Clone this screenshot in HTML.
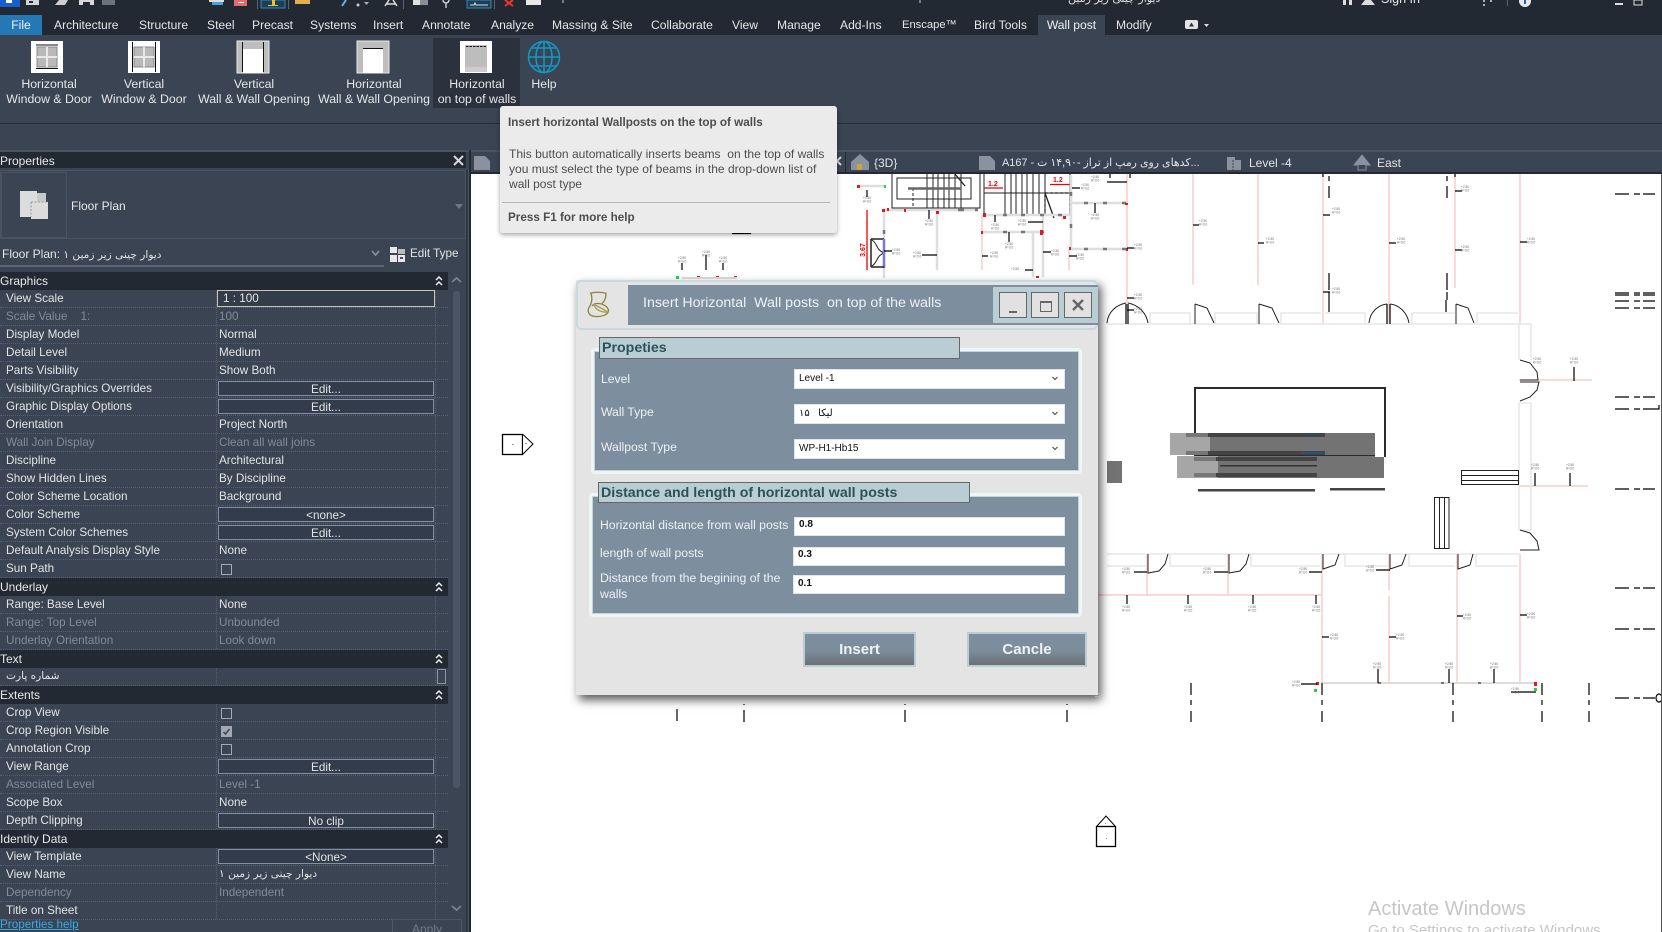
<!DOCTYPE html>
<html lang="en"><head><meta charset="utf-8"><title>Revit</title>
<style>
*{box-sizing:border-box}
html,body{margin:0;padding:0;width:1662px;height:932px;overflow:hidden;background:#fff;font-family:"Liberation Sans","DejaVu Sans",sans-serif}
.a{position:absolute;white-space:nowrap}
#top{left:0;top:0;width:1662px;height:35px;background:#222933}
.tab{top:15px;height:20px;line-height:21px;font-size:12.1px;color:#e6e6e6}
#rib{left:0;top:35px;width:1662px;height:115px;background:#3b4453}
.lbl{font-size:12.3px;color:#e6e6e6;text-align:center;line-height:15px;transform:translateX(-50%)}
#tip{left:500px;top:106px;width:337px;height:127px;background:#ebebeb;border-radius:3px;box-shadow:0 2px 5px rgba(0,0,0,.35);z-index:5;color:#4d4d4d;font-size:12px}
#props{left:0;top:150px;width:471px;height:782px;background:#3b4453;overflow:hidden}
.r{position:absolute;left:0;width:448px;height:18px;color:#e4e4e4;font-size:11.7px;line-height:15px;border-bottom:1px dotted #566072}
.r i{position:absolute;top:0;bottom:0;left:216px;width:1px;border-left:1px dotted #566072}
.r u{position:absolute;top:0;bottom:0;left:435px;width:1px;border-left:1px dotted #566072}
.r b{font-weight:normal;position:absolute;left:6px;top:1px}
.r em{font-style:normal;position:absolute;left:219px;top:1px}
.r.d{color:#828b99}
.r .btn{position:absolute;left:218px;top:1px;width:216px;height:15px;border:1px solid #8390a4;background:#333c4a;text-align:center;line-height:15px;color:#e4e4e4}
.r .cb{position:absolute;left:221px;top:4px;width:11px;height:11px;border:1px solid #a2a9b4}
.h{position:absolute;left:0;width:448px;height:18px;background:#222933;color:#e8e8e8;font-size:12px;line-height:17px}
.h span{position:absolute;left:0;top:1px}
.h svg{position:absolute;left:435px;top:3px}
#dlg{left:576px;top:280px;width:522px;height:415px;background:#e4e4e4;box-shadow:3px 5px 9px rgba(0,0,0,.65);z-index:4;color:#eef1f3}
.grp{position:absolute;background:#7d8f9f;border:3px solid #eff4f5;border-radius:4px;box-shadow:inset 0 0 0 1px #c2d5da}
.gh{position:absolute;background:#b8ced4;border:1px solid #666;color:#2f5058;font-size:14.2px;font-weight:bold;line-height:21px;padding-left:2px}
.f{position:absolute;background:#fff;border:1px solid #dfe6ea;color:#111;font-size:10px;font-weight:bold;line-height:13px;padding-left:4px}
.dl{position:absolute;font-size:12.2px;color:#eef1f3;line-height:16px}
.wb{position:absolute;top:12px;width:28px;height:26px;background:#e1e1e1;border:1px solid #666}
.bt{position:absolute;top:352px;height:35px;border:2px solid #b8ced4;background:linear-gradient(#7d8f9f 0,#7b8c9b 55%,#6c7074 100%);color:#eef2f4;font-weight:bold;font-size:15px;text-align:center;line-height:31px}
svg text{font-family:"Liberation Sans",sans-serif}
.t{font-size:3.2px;fill:#666;text-anchor:middle}
.fa{font-family:"DejaVu Sans",sans-serif;font-size:10.6px}
</style></head><body>

<div class="a" id="top"></div>
<svg class="a" style="left:0;top:0" width="1662" height="15" viewBox="0 0 1662 15">
<rect x="0" y="0" width="20" height="7" fill="#1560cc"/><rect x="6" y="0" width="6" height="3" fill="#fff"/>
<rect x="26" y="0" width="13" height="5" fill="#d5d5d5"/><rect x="29" y="1" width="4" height="2" fill="#222933"/>
<path d="M55 5L59 0H68L65 5Z" fill="#cfcfcf"/><rect x="79" y="0" width="15" height="5" fill="#d8d8d8"/><rect x="83" y="2" width="7" height="3" fill="#222933"/>
<rect x="102" y="0" width="13" height="5" fill="#6d737c"/>
<rect x="212" y="0" width="11" height="5" fill="#4aa0e0"/><rect x="209" y="0" width="15" height="2" fill="#ddd"/>
<rect x="234" y="0" width="13" height="6" fill="#e9686c"/><rect x="238" y="2" width="6" height="1" fill="#fff"/>
<rect x="257" y="0" width="1" height="9" fill="#5a6370"/>
<rect x="261" y="0" width="24" height="8" fill="#1d3f55" stroke="#3c87ad"/><rect x="272" y="0" width="3" height="5" fill="#f0c040"/><rect x="268" y="5" width="10" height="1" fill="#f0c040"/>
<rect x="288" y="0" width="1" height="9" fill="#5a6370"/>
<rect x="295" y="0" width="15" height="4" fill="#e0b050"/>
<path d="M346 0L342 6" stroke="#6ab0e0" stroke-width="2"/><circle cx="358" cy="5" r="1.5" fill="#ccc"/><path d="M364 2h5l-2.500 3z" fill="#aaa"/>
<path d="M385 6L389 0M393 0L397 6M387 4H395" stroke="#ddd" stroke-width="1.500"/>
<rect x="403" y="0" width="1" height="9" fill="#5a6370"/>
<rect x="413" y="0" width="7" height="5" fill="#e0e0e0"/><rect x="420" y="0" width="8" height="5" fill="#8a8f96"/>
<path d="M443 0a3 3 0 0 0 6 0M446 3v5" stroke="#ddd" fill="none" stroke-width="1.300"/>
<rect x="467" y="0" width="24" height="8" fill="#1d3f55" stroke="#3c87ad"/><path d="M470 5h4l1-2 1 2h12" stroke="#ddd" fill="none"/>
<rect x="494" y="0" width="1" height="9" fill="#5a6370"/>
<path d="M505 0l8 6M513 0l-8 6" stroke="#e33" stroke-width="2"/><rect x="526" y="0" width="15" height="5" fill="#e8e8e8"/>
<path d="M563 0v3" stroke="#ccc"/><path d="M920 0v3" stroke="#ccc"/>
<rect x="1343" y="0" width="3" height="5" fill="#ddd"/><rect x="1349" y="0" width="3" height="5" fill="#ddd"/>
<path d="M1361 5h14l-4-5h-6z" fill="#ddd"/>
<rect x="1483" y="0" width="2" height="2" fill="#aac"/><rect x="1490" y="0" width="2" height="2" fill="#aac"/><rect x="1483" y="4" width="2" height="2" fill="#aac"/>
<rect x="1507" y="0" width="1" height="6" fill="#5a6370"/><circle cx="1525" cy="1" r="6" fill="#e8e8e8"/><rect x="1524" y="0" width="2" height="4" fill="#2b5fa8"/>
<rect x="1615" y="3" width="8" height="2" fill="#ddd"/><rect x="1634" y="0" width="8" height="5" fill="none" stroke="#ddd"/>
<text x="1381" y="3" font-size="12.500" fill="#e6e6e6">Sign In</text>
<text x="1068" y="2" font-size="11" fill="#ddd" style="font-family:'DejaVu Sans',sans-serif">دیوار چینی زیر زمین</text>
</svg>
<div class="a tab" style="left:0;width:42px;background:#2478b5;color:#f2f2f2;text-align:center">File</div>
<div class="a tab" style="left:54px">Architecture</div>
<div class="a tab" style="left:139px">Structure</div>
<div class="a tab" style="left:207px">Steel</div>
<div class="a tab" style="left:252px">Precast</div>
<div class="a tab" style="left:310px">Systems</div>
<div class="a tab" style="left:373px">Insert</div>
<div class="a tab" style="left:422px">Annotate</div>
<div class="a tab" style="left:491px">Analyze</div>
<div class="a tab" style="left:552px">Massing &amp; Site</div>
<div class="a tab" style="left:651px">Collaborate</div>
<div class="a tab" style="left:732px">View</div>
<div class="a tab" style="left:777px">Manage</div>
<div class="a tab" style="left:840px">Add-Ins</div>
<div class="a tab" style="left:902px;font-size:11.2px">Enscape™</div>
<div class="a tab" style="left:974px">Bird Tools</div>
<div class="a tab" style="left:1038px;width:67px;background:#3b4453;text-align:center;color:#f0f0f0">Wall post</div>
<div class="a tab" style="left:1116px">Modify</div>
<svg class="a" style="left:1185px;top:31px;margin-top:-13px" width="26" height="12" viewBox="0 0 26 12"><rect x="0" y="2" width="13" height="9" rx="2" fill="#e4e4e4"/><path d="M4 8.500l2.500-4 2.500 4z" fill="#333"/><path d="M19 6h5l-2.500 3z" fill="#ddd"/></svg>

<div class="a" id="rib"></div>
<div class="a" style="left:0;top:123px;width:1662px;height:1px;background:#262c37"></div>
<div class="a" style="left:433px;top:38px;width:87px;height:70px;background:#2b313d"></div>

<svg class="a" style="left:0;top:35px" width="600" height="45" viewBox="0 35 600 45">
<g>
<rect x="31" y="41" width="32" height="32" fill="#fff"/><rect x="37" y="47" width="20" height="20" fill="#b9b9b9" stroke="#888"/><path d="M37 57H57M47 47V67" stroke="#e8e8e8" stroke-width="2"/><path d="M36 45H58M36 68.500H58" stroke="#111"/>
<rect x="128" y="41" width="32" height="32" fill="#fff"/><rect x="134" y="47" width="20" height="20" fill="#b9b9b9" stroke="#888"/><path d="M134 57H154M144 47V67" stroke="#e8e8e8" stroke-width="2"/><path d="M132.500 42V72M155.500 42V72" stroke="#111"/>
<rect x="237" y="41" width="32" height="32" fill="#bdbdbd" stroke="#e8e8e8"/><rect x="243" y="49" width="20" height="24" fill="#fff"/><path d="M242.500 42V72M263.500 42V72" stroke="#111"/>
<rect x="357" y="41" width="32" height="32" fill="#bdbdbd" stroke="#e8e8e8"/><rect x="363" y="49" width="20" height="24" fill="#fff"/><path d="M363 48.500H383" stroke="#111"/>
<rect x="460" y="41" width="32" height="32" fill="#fff"/><rect x="465" y="45" width="22" height="27" fill="#bdbdbd"/><rect x="465" y="67" width="22" height="5" fill="#cdcdcd"/><path d="M466 46.500H486" stroke="#111" stroke-dasharray="2.500 1"/>
<g fill="none" stroke="#0f9ac6" stroke-width="1.500"><circle cx="544" cy="57" r="15.500"/><ellipse cx="544" cy="57" rx="8" ry="15.500"/><path d="M544 41.500V72.500M528.500 57H559.500M531 48H557M531 66H557"/></g>
</g></svg>
<div class="a lbl" style="left:49px;top:77px">Horizontal<br>Window &amp; Door</div>
<div class="a lbl" style="left:144px;top:77px">Vertical<br>Window &amp; Door</div>
<div class="a lbl" style="left:254px;top:77px">Vertical<br>Wall &amp; Wall Opening</div>
<div class="a lbl" style="left:374px;top:77px">Horizontal<br>Wall &amp; Wall Opening</div>
<div class="a lbl" style="left:477px;top:77px">Horizontal<br>on top of walls</div>
<div class="a lbl" style="left:544px;top:77px">Help</div>

<div class="a" id="tip">
<div class="a" style="left:8px;top:10px;font-weight:bold;font-size:11.7px">Insert horizontal Wallposts on the top of walls</div>
<div class="a" style="left:9px;top:41px;line-height:15px;font-size:12.05px">This button automatically inserts beams&nbsp; on the top of walls<br>you must select the type of beams in the drop-down list of<br>wall post type</div>
<div class="a" style="left:2px;top:96px;width:328px;height:1px;background:#b5b5b5"></div>
<div class="a" style="left:8px;top:105px;font-weight:bold;font-size:11.7px">Press F1 for more help</div>
</div>

<!-- tab strip -->
<div class="a" style="left:471px;top:150px;width:1191px;height:2px;background:#4a5362"></div>
<div class="a" style="left:471px;top:152px;width:1191px;height:20px;background:#3b4453"></div>
<div class="a" style="left:471px;top:172px;width:1191px;height:2px;background:#222933"></div>
<svg class="a" style="left:471px;top:152px" width="1191" height="20" viewBox="471 152 1191 20">
<path d="M474 156H485L490 161V170H474Z" fill="#8b929d"/>
<path d="M833 157l8 8M841 157l-8 8" stroke="#d8d8d8" stroke-width="2"/>
<rect x="845" y="152" width="1" height="20" fill="#222933"/>
<path d="M851 162L860 154L869 162V170H851Z" fill="#8b929d"/><rect x="857" y="164" width="5" height="6" fill="#caa43c"/>
<path d="M979 156H990L995 161V170H979Z" fill="#8b929d"/>
<path d="M1227 157H1235V160H1241V170H1227Z" fill="#8b929d"/><path d="M1233 160V170" stroke="#3b4453" stroke-dasharray="2 1"/>
<path d="M1354 165L1362 155L1370 165H1366V170H1358V165Z" fill="none" stroke="#8b929d"/><path d="M1354 165L1362 155L1370 165Z" fill="#8b929d"/>
</svg>
<div class="a" style="left:874px;top:156px;font-size:12px;color:#e4e4e4">{3D}</div>
<div class="a" dir="rtl" style="left:1002px;top:156px;width:198px;text-align:left;font-size:10.9px;line-height:14px;color:#e4e4e4;font-family:'Liberation Sans','DejaVu Sans',sans-serif">...کدهای روی رمپ از تراز -۱۴,۹۰ ت - A167</div>
<div class="a" style="left:1249px;top:156px;font-size:12px;color:#e4e4e4">Level -4</div>
<div class="a" style="left:1377px;top:156px;font-size:12px;color:#e4e4e4">East</div>

<!-- Floor plan -->
<svg class="a" style="left:0;top:0" width="1662" height="932" viewBox="0 0 1662 932">
<g fill="none">
<!-- pink verticals -->
<g stroke="#fbcccc" stroke-width="1.500">
<path d="M1127 174V310M1193 174V285M1258 174V285M1323 174V324M1389 174V324M1455 174V288M1520 174V324"/>
<path d="M1519 380H1592M1519 486H1588M1098 595H1322M1147 554V595M1228 554V595M1322 554V683M1389 554V590M1389 596V683M1457 554V683M1520 554V683"/>
<path d="M982 215V270M1069 250V270"/>
</g>
<!-- room walls light -->
<g stroke="#e5e7e8" stroke-width="1.500">
<path d="M1107 324H1519M1107 554H1519"/>
<path d="M1150 324V313H1190V324M1215 324V313H1257V324M1281 324V313H1321M1325 313H1365V324M1412 324V313H1455M1477 324V313H1518"/>
<path d="M1519 324V360M1531 360V324M1519 324H1531M1519 403V530M1531 403V530M1519 403H1531M1519 530H1531"/>
<path d="M1107 566H1146M1170 554V566H1226M1251 554V566H1320M1345 554V566H1388M1409 554V566H1455M1476 554V566H1518"/>
</g>
<path d="M1322 683H1537" stroke="#dcdcdc" stroke-width="2"/>
<path d="M1478 683h3M1378 683h3M1441 683h3" stroke="#777" stroke-width="2"/>
<!-- doors -->
<g stroke="#222" stroke-width="1">
<path d="M1126 304V324M1128 304V324" stroke-width="1.400"/>
<path d="M1107 323C1108 312 1116 305 1126 303M1128 303C1138 305 1146 312 1148 323"/>
<path d="M1195 304V324M1195 304L1207 308L1214 323"/>
<path d="M1259 304V324M1259 304L1272 308L1279 323"/>
<path d="M1387 304V324M1390 304V324" stroke-width="1.400"/>
<path d="M1369 323C1370 312 1378 305 1387 304M1390 304C1399 305 1407 312 1409 323"/>
<path d="M1456 304V324M1456 304L1468 308L1474 323"/>
<path d="M1520 360L1530 363L1537 372L1538 380H1520"/>
<path d="M1520 382H1539L1537 390L1530 397L1520 401"/>
<path d="M1520 530L1530 533L1537 541L1539 550H1520"/>
<path d="M1148 554V573L1159 571L1165 564L1168 554"/>
<path d="M1229 554V573L1240 571L1246 564L1249 554"/>
<path d="M1323 554V569L1335 565L1339 554"/>
<path d="M1390 554V569L1402 565L1406 554"/>
<path d="M1458 554V569L1470 565L1473 554"/>
</g>
<!-- central rect -->
<rect x="1195" y="388" width="190" height="68" stroke="#2b2b2b" stroke-width="2"/>
</g>
<rect x="1170" y="433" width="205" height="22" fill="#737373"/><rect x="1170" y="433" width="40" height="22" fill="#a6a6a6"/>
<rect x="1186" y="433" width="22" height="4" fill="#777"/><rect x="1208" y="433" width="117" height="4" fill="#444"/><rect x="1302" y="434" width="23" height="2" fill="#2d4c63"/>
<rect x="1186" y="451" width="22" height="4" fill="#777"/><rect x="1208" y="451" width="117" height="4" fill="#444"/><rect x="1302" y="452" width="23" height="1.500" fill="#1e5a80"/>
<rect x="1177" y="456" width="207" height="22" fill="#737373"/><rect x="1177" y="456" width="41" height="22" fill="#a6a6a6"/><rect x="1375" y="455" width="9" height="2" fill="#fff"/>
<rect x="1194" y="457" width="22" height="4" fill="#777"/><rect x="1216" y="457" width="101" height="4" fill="#444"/>
<rect x="1194" y="473" width="22" height="4" fill="#777"/><rect x="1216" y="473" width="101" height="4" fill="#444"/>
<rect x="1220" y="465" width="97" height="1.500" fill="#333"/>
<rect x="1198" y="489" width="117" height="2.500" fill="#444"/><rect x="1330" y="488" width="55" height="2.500" fill="#444"/>
<rect x="1107" y="461" width="15" height="22" fill="#737373"/>
<g fill="none" stroke="#222">
<rect x="1461.500" y="470.500" width="57" height="14"/><path d="M1462 475.500H1518M1462 480.500H1518"/>
<rect x="1434.500" y="497.500" width="14.500" height="51"/><path d="M1439.500 498V548M1444.500 498V548"/>
</g>
<!-- stairs -->
<g fill="none" stroke="#222">
<path d="M892 174V208H980V174"/><rect x="897" y="178" width="74" height="21"/>
<path d="M927 174V208M933 174V208M938 174V208M944 174V208M949 174V208M955 174V208M961 174V208"/>
<path d="M913 188V206" stroke-dasharray="3 2"/>
<path d="M984 174V215H1070V174M984 193H1070M984 188V215"/>
<path d="M1005 174V215M1011 174V215M1016 174V215M1022 174V215M1027 174V215M1033 174V215M1039 174V215M1045 174V215"/>
<path d="M1045 193L1054 218M955 174L965 186" stroke-width="1.300"/>
<path d="M1045 193H1070V215H1045Z" stroke-dasharray="3 2" stroke-width="1.200"/>
</g>
<path d="M908 188.500H961" stroke="#666" stroke-width="2.500"/>
<path d="M984 188H1003M1050 184.500H1070" stroke="#e00" stroke-width="1.300"/>
<text x="988" y="186" font-size="7" fill="#e00" font-weight="bold">1.2</text><text x="1053" y="182" font-size="7" fill="#e00" font-weight="bold">1.2</text>
<!-- plan walls -->
<g fill="none" stroke="#dedede" stroke-width="2.500">
<path d="M884 210H978M884 210V278M937 210V270M984 215H1070M982 232H1042M1033 232V277M1043 215V277M1071 175V250M1072 203H1127M1070 249H1127M858 186H885"/>
</g>
<g fill="none" stroke="#777" stroke-width="2.500">
<path d="M958 210h6M975 210h3M1003 215h4M1021 215h4M1040 215h4M1058 215h4M1003 232h4M1021 232h4M1041 232h3M1084 203h4M1103 203h4M1122 203h4M1084 249h4M1103 249h4M1122 249h4M884 230v4M884 250v3M884 264v4M1071 192v4M1071 224v4"/>
</g>
<g fill="#e01a1a">
<rect x="882" y="209" width="3" height="3"/><rect x="887" y="208" width="2" height="3"/><rect x="904" y="209" width="2" height="3"/><rect x="936" y="211" width="3" height="3"/>
<rect x="983" y="213" width="3" height="4"/><rect x="1063" y="216" width="3" height="3"/><rect x="981" y="231" width="2" height="3"/><rect x="1040" y="230" width="3" height="5"/><rect x="1069" y="247" width="2" height="3"/><rect x="1125" y="203" width="3" height="2"/><rect x="1126" y="248" width="2" height="3"/><rect x="1036" y="276" width="3" height="2"/>
<rect x="857" y="185" width="3" height="3"/><rect x="697" y="276" width="3" height="3"/><rect x="716" y="276" width="3" height="3"/><rect x="734" y="276" width="3" height="3"/>
<rect x="1316" y="682" width="3" height="3"/><rect x="1534" y="682" width="3" height="4"/>
</g>
<g fill="#24d24a"><rect x="884" y="185" width="2" height="3"/><rect x="676" y="276" width="3" height="3"/><rect x="1314" y="689" width="3" height="3"/><rect x="1534" y="688" width="3" height="3"/></g>
<rect x="682" y="277" width="55" height="2" fill="#dcdcdc"/>
<path d="M867 210V270" stroke="#e00" stroke-width="1.300"/>
<text transform="translate(865 250) rotate(-90)" font-size="7" fill="#e00" font-weight="bold" text-anchor="middle">3.67</text>
<path d="M871 239V267M871 239H884M871 267H884" stroke="#222" stroke-width="1.500" fill="none"/>
<path d="M872 240C878 244 876 250 884 253C876 256 878 262 872 266" stroke="#222" fill="none"/>
<path d="M884 239V266" stroke="#7a7ad8" stroke-width="2.500"/>
<!-- black ticks -->
<g stroke="#000" stroke-width="1.200" fill="none">
<path d="M1329 176V181M1329 186V198M1329 273V290M1329 292V300M1329 300V312M1447 176V181M1447 186V198M1447 273V290M1447 292V300M1446 300V312M1323 174V177M1455 174V177M1110 174V178M1130 174V178"/>
<path d="M1193 225H1199M1258 243H1264M1323 215H1330M1389 243H1396M1455 191H1462M1455 250H1462M1520 242H1527M1323 292H1330M1127 248H1134M1127 298H1134M1127 310H1134"/>
<path d="M1107 182H1127M1072 188H1080M1095 203V213M867 190V197M929 210V219M995 215V222M1028 222H1043M1009 232V242M1043 252H1051M1069 256H1077M982 256H988M922 255H937M1025 270H1033M884 251H892"/>
<path d="M682 263V270M706 255V270M723 263V270M732 233.500H751"/>
<path d="M1574 367V381M1535 473V486M1570 473V486M1134 572H1147M1214 572H1228M1309 572H1322M1376 570H1390"/>
<path d="M1127 595V604M1188 595V604M1253 595V604M1316 595V604M1322 637H1329M1389 637H1396M1457 616H1463M1520 615H1527M1378 669V683M1449 669V683M1494 669V683M1301 684H1317M1511 692H1536"/>
<!-- grid ticks -->
<path d="M1191 683V695M1191 700V705M1191 711V722M1322 683V695M1322 700V705M1322 711V722M1453 683V695M1453 700V705M1453 711V722M1542 683V695M1542 700V705M1542 711V722M1589 683V695M1589 700V705M1589 711V722M1067 704V705M1067 710V722M905 704V705M905 710V722M744 704V705M744 710V722M677 709V721"/>
<path d="M1615 194H1629M1634 194H1640M1643 194H1655M1615 295H1629M1634 295H1640M1643 295H1655M1615 293H1629M1634 293H1640M1643 293H1655M1615 301H1629M1634 301H1640M1643 301H1655M1615 308H1629M1634 308H1640M1643 308H1655M1615 397H1629M1634 397H1640M1643 397H1655M1615 409H1629M1634 409H1640M1643 409H1655M1615 489H1629M1634 489H1640M1643 489H1655M1615 588H1629M1634 588H1640M1643 588H1655M1615 629H1629M1634 629H1640M1643 629H1655M1615 698H1629M1634 698H1640M1643 698H1655" stroke-width="1.300"/>
<path d="M1655 409H1659V405M1656 698A3 4 0 0 1 1662 698A3 4 0 0 1 1656 698Z"/>
</g>
<!-- tags -->
<g>
<text class="t" x="1203" y="222">+2.50<tspan x="1203" dy="3.500">H=3.0</tspan></text>
<text class="t" x="1270" y="240">+2.50<tspan x="1270" dy="3.500">H=3.0</tspan></text>
<text class="t" x="1336" y="210">+2.50<tspan x="1336" dy="3.500">H=3.0</tspan></text>
<text class="t" x="1401" y="240">+2.50<tspan x="1401" dy="3.500">H=3.0</tspan></text>
<text class="t" x="1465" y="188">+2.50<tspan x="1465" dy="3.500">H=3.0</tspan></text>
<text class="t" x="1465" y="248">+2.50<tspan x="1465" dy="3.500">H=3.0</tspan></text>
<text class="t" x="1531" y="240">+2.50<tspan x="1531" dy="3.500">H=3.0</tspan></text>
<text class="t" x="1336" y="290">+2.50<tspan x="1336" dy="3.500">H=3.0</tspan></text>
<text class="t" x="1138" y="246">+2.50<tspan x="1138" dy="3.500">H=3.0</tspan></text>
<text class="t" x="1138" y="296">+2.50<tspan x="1138" dy="3.500">H=3.0</tspan></text>
<text class="t" x="1138" y="310">+2.50<tspan x="1138" dy="3.500">H=3.0</tspan></text>
<text class="t" x="1095" y="178">+2.50<tspan x="1095" dy="3.500">H=3.0</tspan></text>
<text class="t" x="1085" y="186">+2.50<tspan x="1085" dy="3.500">H=3.0</tspan></text>
<text class="t" x="1095" y="216">+2.50<tspan x="1095" dy="3.500">H=3.0</tspan></text>
<text class="t" x="867" y="199">+2.50<tspan x="867" dy="3.500">H=3.0</tspan></text>
<text class="t" x="929" y="222">+2.50<tspan x="929" dy="3.500">H=3.0</tspan></text>
<text class="t" x="995" y="226">+2.50<tspan x="995" dy="3.500">H=3.0</tspan></text>
<text class="t" x="1022" y="222">+2.50<tspan x="1022" dy="3.500">H=3.0</tspan></text>
<text class="t" x="1009" y="245">+2.50<tspan x="1009" dy="3.500">H=3.0</tspan></text>
<text class="t" x="1055" y="252">+2.50<tspan x="1055" dy="3.500">H=3.0</tspan></text>
<text class="t" x="1080" y="256">+2.50<tspan x="1080" dy="3.500">H=3.0</tspan></text>
<text class="t" x="994" y="254">+2.50<tspan x="994" dy="3.500">H=3.0</tspan></text>
<text class="t" x="917" y="254">+2.50<tspan x="917" dy="3.500">H=3.0</tspan></text>
<text class="t" x="1015" y="270">+2.50</text>
<text class="t" x="896" y="251">+2.50<tspan x="896" dy="3.500">H=3.0</tspan></text>
<text class="t" x="682" y="259">+2.50<tspan x="682" dy="3.500">H=3.0</tspan></text>
<text class="t" x="706" y="253">+2.50<tspan x="706" dy="3.500">H=3.0</tspan></text>
<text class="t" x="723" y="259">+2.50<tspan x="723" dy="3.500">H=3.0</tspan></text>
<text class="t" x="1537" y="360">+2.50<tspan x="1537" dy="3.500">H=3.0</tspan></text>
<text class="t" x="1574" y="360">+2.50<tspan x="1574" dy="3.500">H=3.0</tspan></text>
<text class="t" x="1535" y="466">+2.50<tspan x="1535" dy="3.500">H=3.0</tspan></text>
<text class="t" x="1570" y="466">+2.50<tspan x="1570" dy="3.500">H=3.0</tspan></text>
<text class="t" x="1126" y="570">+2.50<tspan x="1126" dy="3.500">H=3.0</tspan></text>
<text class="t" x="1207" y="570">+2.50<tspan x="1207" dy="3.500">H=3.0</tspan></text>
<text class="t" x="1303" y="570">+2.50<tspan x="1303" dy="3.500">H=3.0</tspan></text>
<text class="t" x="1370" y="568">+2.50<tspan x="1370" dy="3.500">H=3.0</tspan></text>
<text class="t" x="1126" y="608">+2.50<tspan x="1126" dy="3.500">H=3.0</tspan></text>
<text class="t" x="1188" y="608">+2.50<tspan x="1188" dy="3.500">H=3.0</tspan></text>
<text class="t" x="1252" y="608">+2.50<tspan x="1252" dy="3.500">H=3.0</tspan></text>
<text class="t" x="1316" y="608">+2.50<tspan x="1316" dy="3.500">H=3.0</tspan></text>
<text class="t" x="1334" y="636">+2.50<tspan x="1334" dy="3.500">H=3.0</tspan></text>
<text class="t" x="1400" y="636">+2.50<tspan x="1400" dy="3.500">H=3.0</tspan></text>
<text class="t" x="1467" y="616">+2.50<tspan x="1467" dy="3.500">H=3.0</tspan></text>
<text class="t" x="1531" y="615">+2.50<tspan x="1531" dy="3.500">H=3.0</tspan></text>
<text class="t" x="1377" y="665">+2.50<tspan x="1377" dy="3.500">H=3.0</tspan></text>
<text class="t" x="1449" y="665">+2.50<tspan x="1449" dy="3.500">H=3.0</tspan></text>
<text class="t" x="1494" y="665">+2.50<tspan x="1494" dy="3.500">H=3.0</tspan></text>
<text class="t" x="1296" y="683">+2.50<tspan x="1296" dy="3.500">H=3.0</tspan></text>
<text class="t" x="1515" y="690">+2.50<tspan x="1515" dy="3.500">H=3.0</tspan></text>
</g>
<!-- elevation markers -->
<g fill="#fff" stroke="#000">
<rect x="502.500" y="434.500" width="20" height="20" stroke-width="1.300"/><path d="M523 434.500L533 444L523 454"/>
<path d="M1097 826L1106 816L1115 826"/><rect x="1096.500" y="826.500" width="19" height="20" stroke-width="1.300"/>
</g>
<rect x="512" y="444" width="2" height="1" fill="#999"/><rect x="525" y="443" width="2" height="1" fill="#999"/><rect x="1106" y="838" width="1" height="1" fill="#999"/><rect x="1105" y="823" width="1" height="1" fill="#999"/>
<rect x="1661" y="174" width="1" height="758" fill="#555"/>
<text x="1368" y="915" font-size="20" fill="#c6c6c6">Activate Windows</text>
<text x="1368" y="935" font-size="15" fill="#c6c6c6">Go to Settings to activate Windows.</text>
</svg>

<!-- Properties palette -->
<div class="a" id="props">
<div class="a" style="left:0;top:0;width:471px;height:2px;background:#4a5362"></div>
<div class="a" style="left:0;top:2px;width:466px;height:16px;background:#222933;color:#e8e8e8;font-size:12px;line-height:18px">Properties</div>
<svg class="a" style="left:453px;top:5px" width="12" height="12" viewBox="0 0 12 12"><path d="M1 1l9 9M10 1l-9 9" stroke="#d8d8d8" stroke-width="2"/></svg>
<div class="a" style="left:0;top:20px;width:466px;height:69px;border:1px solid #4a5362"></div>
<div class="a" style="left:1px;top:22px;width:66px;height:66px;border:1px solid #4a5362"></div>
<svg class="a" style="left:18px;top:39px" width="34" height="32" viewBox="0 0 34 32"><rect x="2" y="2" width="17" height="26" fill="#dcdcdc"/><rect x="19" y="4" width="9" height="10" fill="#c9c9c9"/><rect x="13" y="13" width="17" height="17" fill="#dcdcdc"/><path d="M13 13H30M13 13V28" stroke="#999" stroke-dasharray="2 1.500" fill="none"/></svg>
<div class="a" style="left:71px;top:49px;font-size:12px;color:#e8e8e8">Floor Plan</div>
<svg class="a" style="left:454px;top:53px" width="10" height="7" viewBox="0 0 10 7"><path d="M1 1h8L5 6z" fill="#6d7684"/></svg>
<div class="a" style="left:2px;top:97px;font-size:12px;color:#e4e4e4">Floor Plan: <span class="fa">۱ دیوار چینی زیر زمین</span></div>
<div class="a" style="left:0;top:115px;width:384px;height:1.500px;background:#5d6677"></div>
<svg class="a" style="left:371px;top:100px" width="9" height="7" viewBox="0 0 9 7"><path d="M1 1l3.500 4L8 1" stroke="#8a929e" stroke-width="1.600" fill="none"/></svg>
<svg class="a" style="left:389px;top:96px" width="17" height="17" viewBox="0 0 17 17"><rect x="1" y="1" width="7" height="6" fill="#e8e8e8"/><rect x="1" y="9" width="7" height="7" fill="#e8e8e8"/><rect x="9" y="3" width="7" height="5" fill="#bbb"/><rect x="9" y="9" width="7" height="7" fill="#e8e8e8"/><rect x="11" y="11" width="3" height="2" fill="#447"/></svg>
<div class="a" style="left:410px;top:97px;font-size:11.7px;color:#e4e4e4">Edit Type</div>

<div class="h" style="top:122px"><span>Graphics</span><svg width="8" height="12" viewBox="0 0 8 12"><path d="M1 5l3-3 3 3M1 10l3-3 3 3" stroke="#eee" stroke-width="1.500" fill="none"/></svg></div>
<div class="r" style="top:140px"><i></i><u></u><b>View Scale</b><div class="a" style="left:217px;top:0;width:218px;height:17px;border:1px solid #cfc5ad;background:#333c4a;padding-left:5px;line-height:15px">1 : 100</div></div>
<div class="r d" style="top:158px"><i></i><u></u><b>Scale Value &nbsp;&nbsp;&nbsp;1:</b><em>100</em></div>
<div class="r" style="top:176px"><i></i><u></u><b>Display Model</b><em>Normal</em></div>
<div class="r" style="top:194px"><i></i><u></u><b>Detail Level</b><em>Medium</em></div>
<div class="r" style="top:212px"><i></i><u></u><b>Parts Visibility</b><em>Show Both</em></div>
<div class="r" style="top:230px"><i></i><u></u><b>Visibility/Graphics Overrides</b><div class="btn">Edit...</div></div>
<div class="r" style="top:248px"><i></i><u></u><b>Graphic Display Options</b><div class="btn">Edit...</div></div>
<div class="r" style="top:266px"><i></i><u></u><b>Orientation</b><em>Project North</em></div>
<div class="r d" style="top:284px"><i></i><u></u><b>Wall Join Display</b><em>Clean all wall joins</em></div>
<div class="r" style="top:302px"><i></i><u></u><b>Discipline</b><em>Architectural</em></div>
<div class="r" style="top:320px"><i></i><u></u><b>Show Hidden Lines</b><em>By Discipline</em></div>
<div class="r" style="top:338px"><i></i><u></u><b>Color Scheme Location</b><em>Background</em></div>
<div class="r" style="top:356px"><i></i><u></u><b>Color Scheme</b><div class="btn">&lt;none&gt;</div></div>
<div class="r" style="top:374px"><i></i><u></u><b>System Color Schemes</b><div class="btn">Edit...</div></div>
<div class="r" style="top:392px"><i></i><u></u><b>Default Analysis Display Style</b><em>None</em></div>
<div class="r" style="top:410px"><i></i><u></u><b>Sun Path</b><div class="cb"></div></div>
<div class="h" style="top:428px"><span>Underlay</span><svg width="8" height="12" viewBox="0 0 8 12"><path d="M1 5l3-3 3 3M1 10l3-3 3 3" stroke="#eee" stroke-width="1.500" fill="none"/></svg></div>
<div class="r" style="top:446px"><i></i><u></u><b>Range: Base Level</b><em>None</em></div>
<div class="r d" style="top:464px"><i></i><u></u><b>Range: Top Level</b><em>Unbounded</em></div>
<div class="r d" style="top:482px"><i></i><u></u><b>Underlay Orientation</b><em>Look down</em></div>
<div class="h" style="top:500px"><span>Text</span><svg width="8" height="12" viewBox="0 0 8 12"><path d="M1 5l3-3 3 3M1 10l3-3 3 3" stroke="#eee" stroke-width="1.500" fill="none"/></svg></div>
<div class="r" style="top:518px"><i></i><u></u><b class="fa">شماره پارت</b><div class="a" style="left:437px;top:1px;width:9px;height:15px;border:1px solid #8a94a6"></div></div>
<div class="h" style="top:536px"><span>Extents</span><svg width="8" height="12" viewBox="0 0 8 12"><path d="M1 5l3-3 3 3M1 10l3-3 3 3" stroke="#eee" stroke-width="1.500" fill="none"/></svg></div>
<div class="r" style="top:554px"><i></i><u></u><b>Crop View</b><div class="cb"></div></div>
<div class="r" style="top:572px"><i></i><u></u><b>Crop Region Visible</b><div class="cb" style="background:#a2a9b4"></div><svg class="a" style="left:221px;top:4px" width="11" height="11" viewBox="0 0 11 11"><path d="M2.500 6l2 2L8.500 3" stroke="#3b4453" stroke-width="1.500" fill="none"/></svg></div>
<div class="r" style="top:590px"><i></i><u></u><b>Annotation Crop</b><div class="cb"></div></div>
<div class="r" style="top:608px"><i></i><u></u><b>View Range</b><div class="btn">Edit...</div></div>
<div class="r d" style="top:626px"><i></i><u></u><b>Associated Level</b><em>Level -1</em></div>
<div class="r" style="top:644px"><i></i><u></u><b>Scope Box</b><em>None</em></div>
<div class="r" style="top:662px"><i></i><u></u><b>Depth Clipping</b><div class="btn">No clip</div></div>
<div class="h" style="top:680px"><span>Identity Data</span><svg width="8" height="12" viewBox="0 0 8 12"><path d="M1 5l3-3 3 3M1 10l3-3 3 3" stroke="#eee" stroke-width="1.500" fill="none"/></svg></div>
<div class="r" style="top:698px"><i></i><u></u><b>View Template</b><div class="btn">&lt;None&gt;</div></div>
<div class="r" style="top:716px"><i></i><u></u><b>View Name</b><em class="fa">۱ دیوار چینی زیر زمین</em></div>
<div class="r d" style="top:734px"><i></i><u></u><b>Dependency</b><em>Independent</em></div>
<div class="r" style="top:752px"><i></i><u></u><b>Title on Sheet</b></div>

<div class="a" style="left:448px;top:122px;width:17px;height:16px;background:#3b4453"></div>
<svg class="a" style="left:451px;top:126px" width="11" height="8" viewBox="0 0 11 8"><path d="M1 6l4.500-4L10 6" stroke="#78818f" stroke-width="1.800" fill="none"/></svg>
<div class="a" style="left:453px;top:141px;width:7px;height:497px;background:#4a5565;border-radius:3px"></div>
<svg class="a" style="left:451px;top:754px" width="11" height="8" viewBox="0 0 11 8"><path d="M1 2l4.500 4L10 2" stroke="#78818f" stroke-width="1.800" fill="none"/></svg>
<div class="a" style="left:0;top:770px;width:466px;height:12px;background:#3b4453"></div>
<div class="a" style="left:0;top:767px;font-size:11.7px;color:#38a8e8;text-decoration:underline;line-height:16px">Properties help</div>
<div class="a" style="left:392px;top:769px;width:70px;height:20px;border:1px solid #4e5768;border-radius:2px;color:#717a88;font-size:12px;text-align:center;line-height:18px">Apply</div>
<div class="a" style="left:466px;top:20px;width:2px;height:762px;background:#2f3746"></div>
<div class="a" style="left:468px;top:20px;width:1px;height:762px;background:#4a5565"></div>
<div class="a" style="left:469px;top:0;width:2px;height:782px;background:#222933"></div>
</div>

<!-- Dialog -->
<div class="a" id="dlg">
<div class="a" style="left:0;top:0;width:522px;height:50px;border:2px solid #c5d9de;border-radius:5px;background:#e4e4e4"></div>
<div class="a" style="left:52px;top:5px;width:470px;height:40px;background:#7d8f9f"></div>
<div class="a" style="left:417px;top:7px;width:105px;height:36px;background:#b8ced4"></div>
<svg class="a" style="left:10px;top:11px" width="24" height="27" viewBox="0 0 24 27"><g fill="none" stroke="#8d8238" stroke-width="1.300"><path d="M4 2.300C9 1 15 1 20 2.300C20 7 19 10 16 12.500"/><path d="M5 2.500C6.500 7 6 11 4 15C0 20 3 25 9 25.500C15 26 22 24 22.500 20C22.500 16 17 12.500 12 12.500C9 12.500 7 13 6 15"/><path d="M7.300 13C10 20 17 22 22.300 20.700M9 14C13 16 17 18 21 20.500" stroke="#a89c52"/></g></svg>
<div class="a" style="left:67px;top:14px;font-size:14.2px;color:#eef1f3;line-height:18px">Insert Horizontal&nbsp; Wall posts&nbsp; on top of the walls</div>
<div class="wb" style="left:423px"><div class="a" style="left:9px;top:18px;width:8px;height:2px;background:#666"></div></div>
<div class="wb" style="left:455px"><div class="a" style="left:8px;top:8px;width:12px;height:11px;border:1px solid #666;border-top-width:2px"></div></div>
<div class="wb" style="left:488px"><svg class="a" style="left:6px;top:5px" width="14" height="14" viewBox="0 0 14 14"><path d="M2 2l10 10M12 2L2 12" stroke="#666" stroke-width="2.400"/></svg></div>

<div class="grp" style="left:15px;top:68px;width:491px;height:126px"></div>
<div class="gh" style="left:23px;top:57px;width:361px;height:22px">Propeties</div>
<div class="dl" style="left:25px;top:91px">Level</div>
<div class="dl" style="left:25px;top:124px">Wall Type</div>
<div class="dl" style="left:25px;top:159px">Wallpost Type</div>
<div class="f" style="left:218px;top:89px;width:271px;height:20px;line-height:17px;font-weight:normal;color:#111">Level -1</div>
<div class="f" style="left:218px;top:124px;width:271px;height:20px;line-height:18px;font-weight:normal;color:#111">۱۵ &nbsp; لیکا</div>
<div class="f" style="left:218px;top:159px;width:271px;height:20px;line-height:17px;font-weight:normal;color:#111">WP-H1-Hb15</div>
<svg class="a" style="left:0;top:0;pointer-events:none" width="522" height="200" viewBox="0 0 522 200"><path d="M476.500 97l2.500 2.500 2.500-2.500M476.500 132l2.500 2.500 2.500-2.500M476.500 167l2.500 2.500 2.500-2.500" stroke="#444" fill="none"/></svg>

<div class="grp" style="left:13px;top:213px;width:493px;height:124px"></div>
<div class="gh" style="left:22px;top:202px;width:372px;height:21px;line-height:20px">Distance and length of horizontal wall posts</div>
<div class="dl" style="left:24px;top:237px">Horizontal distance from wall posts</div>
<div class="dl" style="left:24px;top:265px">length of wall posts</div>
<div class="dl" style="left:24px;top:290px;font-size:12.3px">Distance from the begining of the<br>walls</div>
<div class="f" style="left:218px;top:237px;width:271px;height:19px">0.8</div>
<div class="f" style="left:217px;top:267px;width:272px;height:19px">0.3</div>
<div class="f" style="left:217px;top:295px;width:272px;height:19px;line-height:15px">0.1</div>
<div class="bt" style="left:227px;width:113px">Insert</div>
<div class="bt" style="left:391px;width:120px">Cancle</div>
</div>
<svg class="a" style="left:1094px;top:689px;z-index:6" width="10" height="10" viewBox="0 0 10 10"><path d="M8 1v1M5 4v1M8 4v1M2 7v1M5 7v1M8 7v1" stroke="#b9c4d6" stroke-width="1.500"/></svg>
</body></html>
